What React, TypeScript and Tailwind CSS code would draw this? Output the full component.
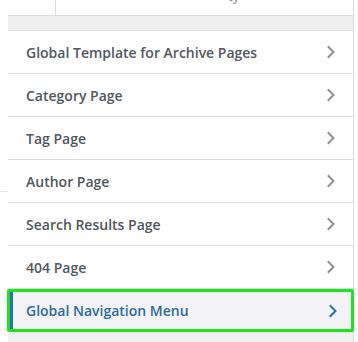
import React from "react";

const sections = [
  "Global Template for Archive Pages",
  "Category Page",
  "Tag Page",
  "Author Page",
  "Search Results Page",
  "404 Page",
];

function Chevron({ color }: { color: string }) {
  return (
    <svg width="10" height="14" viewBox="0 0 10 14" fill="none">
      <path d="M2.5 2 L7.5 7 L2.5 12" stroke={color} strokeWidth="2" strokeLinecap="square" />
    </svg>
  );
}

export default function App() {
  return (
    <div className="relative h-[342px] w-[358px] overflow-hidden bg-white font-['Open_Sans',sans-serif]">
      <div className="absolute left-0 top-[191px] h-px w-[8px] bg-[#e5e5e5]" />
      <div className="ml-[8px] w-[346px] border-r border-[#dcdcde]">
        <div className="relative flex h-[15px] overflow-hidden">
          <div className="w-[48px] border-r border-[#dcdcde]" />
          <span className="absolute left-[220px] top-[-13px] text-[13px] text-[#888]">ty</span>
        </div>
        <div className="h-[16px] border-y border-[#dcdcde] bg-[#eeeeee]" />
        {sections.map((s) => (
          <div
            key={s}
            className="flex h-[43px] items-center justify-between border-b border-[#dcdcde] bg-white pl-[18px] pr-[17px]"
          >
            <span className="text-[14px] font-semibold text-[#50575e]">{s}</span>
            <Chevron color="#8c8f94" />
          </div>
        ))}
        <div className="-ml-px mr-[-1px] flex h-[43px] items-center rounded-[2px] border-[3px] border-[#1de21d] bg-[#f3f3f5]">
          <div className="flex h-full flex-1 items-center justify-between border-l-[3px] border-[#2271b1] pl-[13px] pr-[13px]">
            <span className="text-[14px] font-semibold text-[#2c6aa0]">Global Navigation Menu</span>
            <Chevron color="#2271b1" />
          </div>
        </div>
        <div className="h-[12px] bg-[#f0f0f1]" />
      </div>
    </div>
  );
}
